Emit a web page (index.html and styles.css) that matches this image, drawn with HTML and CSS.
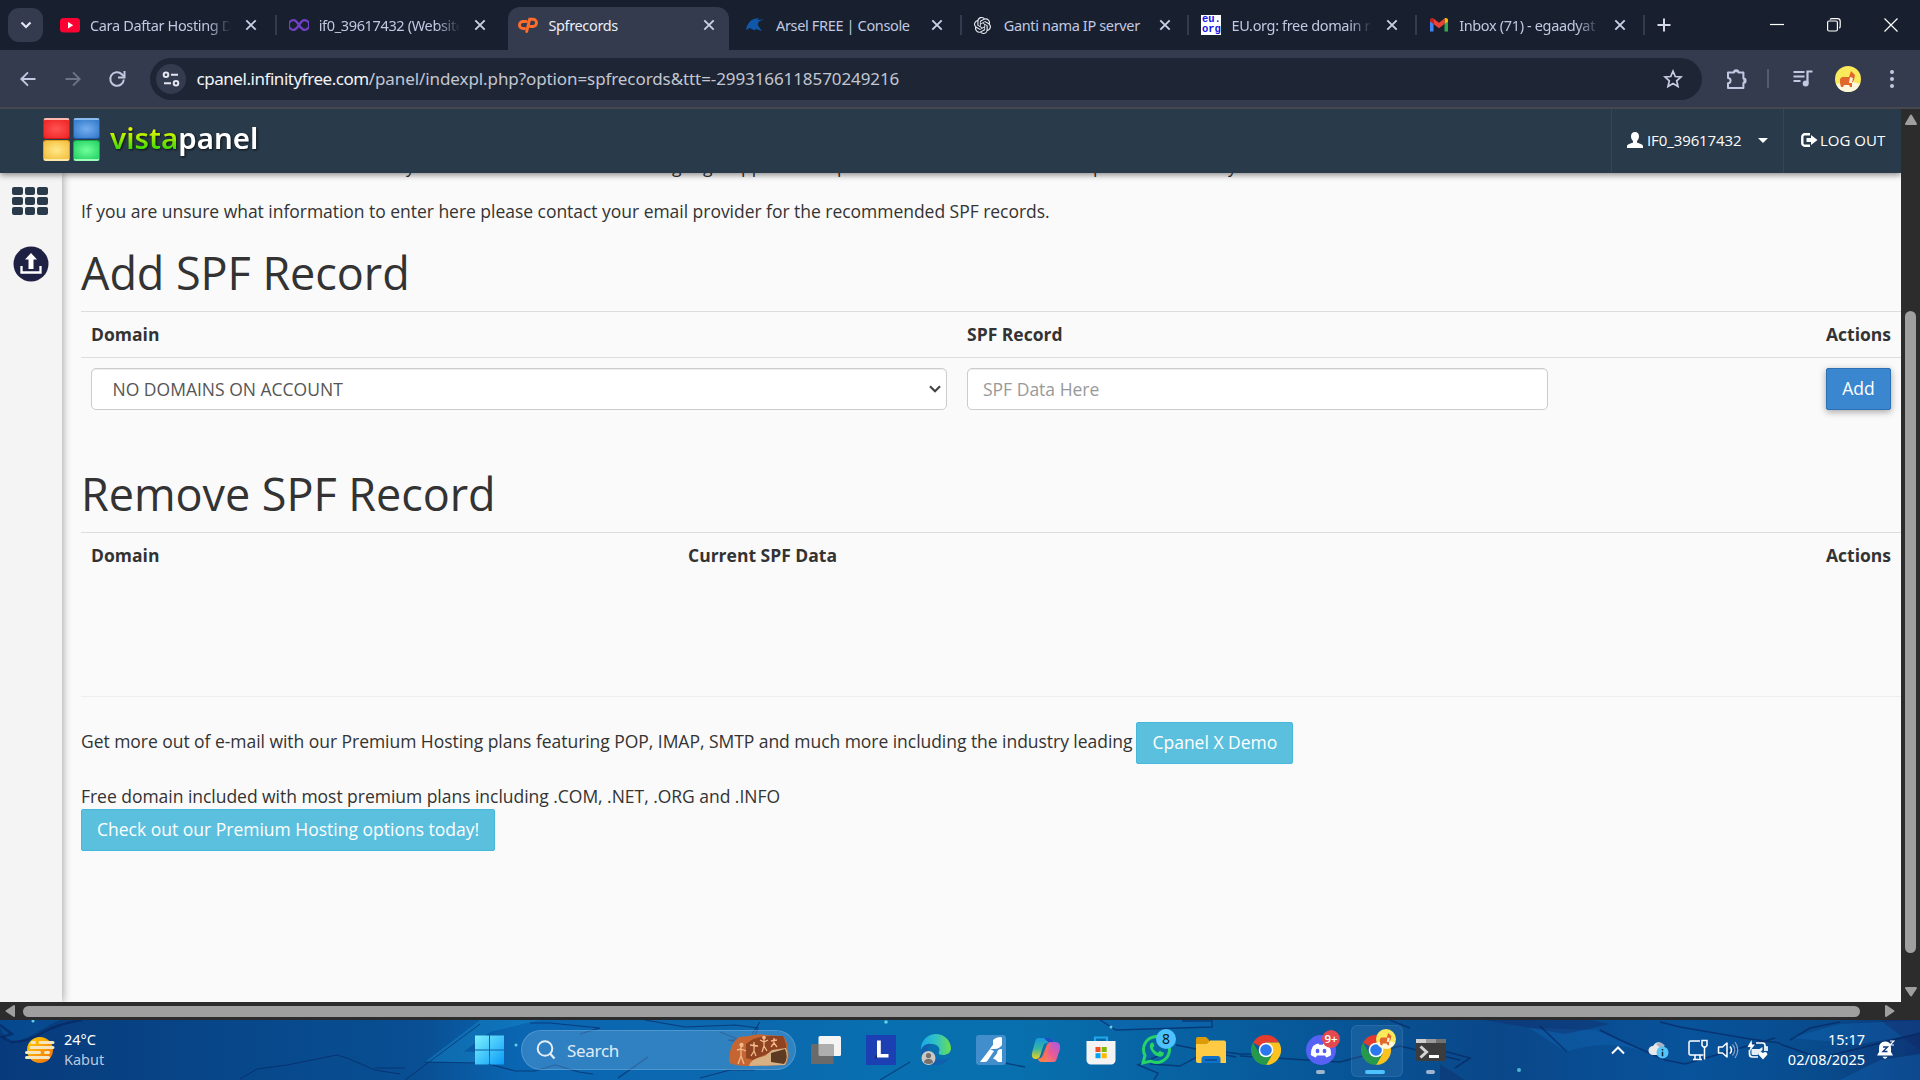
FILE: index.html
```html
<!DOCTYPE html>
<html lang="en">
<head>
<meta charset="utf-8">
<title>Spfrecords</title>
<link rel="stylesheet" href="styles.css">
</head>
<body>
<div class="screen">
  <div class="tabstrip">
    <div class="tab-search"><svg width="12" height="8" viewBox="0 0 12 8"><path d="M1.5 1.5L6 6l4.5-4.5" fill="none" stroke="#e3e6f3" stroke-width="2.2"/></svg></div>
    <div class="tabs">
      <div class="tab wide1"><span class="fav"><svg width="20" height="20" viewBox="0 0 20 20"><rect y="3" width="20" height="14.5" rx="3.5" fill="#ff0033"/><path d="M8 7v6.4l5.2-3.2z" fill="#fff"/></svg></span><span class="label fade">Cara Daftar Hosting Di</span><svg class="x"><use href="#x"/></svg></div>
      <div class="tab wide2 nosep"><span class="fav"><svg width="20" height="20" viewBox="0 0 20 20"><path d="M10 10C7.500 6.300 6 5.200 4.600 5.200a4.800 4.800 0 0 0 0 9.600C6 14.800 7.500 13.700 10 10s4-4.800 5.400-4.800a4.800 4.800 0 0 1 0 9.600C14 14.800 12.500 13.700 10 10z" fill="none" stroke="#7340c8" stroke-width="2.300"/></svg></span><span class="label fade">if0_39617432 (Website)</span><svg class="x"><use href="#x"/></svg></div>
      <div class="tab nosep active"><span class="fav"><svg width="20" height="20" viewBox="0 0 20 20"><path d="M8.200 6.500H5a3.500 3.500 0 0 0 0 7h1.500M8.700 16.500L11.700 4.200h3.200a3.600 3.600 0 0 1 0 7.300h-2.600" fill="none" stroke="#ff6c2c" stroke-width="2.900" stroke-linecap="round"/></svg></span><span class="label">Spfrecords</span><svg class="x"><use href="#x"/></svg></div>
      <div class="tab"><span class="fav"><svg width="20" height="20" viewBox="0 0 20 20"><path d="M0 15c1-5 3-9 8-11l5-1-1.500 2L19 4c-5 1-8 3.500-7 6.500l4 5.500-6-2-1.500 1.500L4 13z" fill="#1157a8"/></svg></span><span class="label">Arsel FREE | Console</span><svg class="x"><use href="#x"/></svg></div>
      <div class="tab"><span class="fav gpt"><svg width="17" height="17" viewBox="0 0 24 24"><path fill="#eceef5" d="M22.2819 9.8211a5.9847 5.9847 0 0 0-.5157-4.9108 6.0462 6.0462 0 0 0-6.5098-2.9A6.0651 6.0651 0 0 0 4.9807 4.1818a5.9847 5.9847 0 0 0-3.9977 2.9 6.0462 6.0462 0 0 0 .7427 7.0966 5.98 5.98 0 0 0 .511 4.9107 6.051 6.051 0 0 0 6.5146 2.9001A5.9847 5.9847 0 0 0 13.2599 24a6.0557 6.0557 0 0 0 5.7718-4.2058 5.9894 5.9894 0 0 0 3.9977-2.9001 6.0557 6.0557 0 0 0-.7475-7.0729zm-9.022 12.6081a4.4755 4.4755 0 0 1-2.8764-1.0408l.1419-.0804 4.7783-2.7582a.7948.7948 0 0 0 .3927-.6813v-6.7369l2.02 1.1686a.071.071 0 0 1 .038.052v5.5826a4.504 4.504 0 0 1-4.4945 4.4944zm-9.6607-4.1254a4.4708 4.4708 0 0 1-.5346-3.0137l.142.0852 4.783 2.7582a.7712.7712 0 0 0 .7806 0l5.8428-3.3685v2.3324a.0804.0804 0 0 1-.0332.0615L9.74 19.9502a4.4992 4.4992 0 0 1-6.1408-1.6464zM2.3408 7.8956a4.485 4.485 0 0 1 2.3655-1.9728V11.6a.7664.7664 0 0 0 .3879.6765l5.8144 3.3543-2.0201 1.1685a.0757.0757 0 0 1-.071 0l-4.8303-2.7865A4.504 4.504 0 0 1 2.3408 7.872zm16.5963 3.8558L13.1038 8.364 15.1192 7.2a.0757.0757 0 0 1 .071 0l4.8303 2.7913a4.4944 4.4944 0 0 1-.6765 8.1042v-5.6772a.79.79 0 0 0-.407-.667zm2.0107-3.0231l-.142-.0852-4.7735-2.7818a.7759.7759 0 0 0-.7854 0L9.409 9.2297V6.8974a.0662.0662 0 0 1 .0284-.0615l4.8303-2.7866a4.4992 4.4992 0 0 1 6.6802 4.66zM8.3065 12.863l-2.02-1.1638a.0804.0804 0 0 1-.038-.0567V6.0742a4.4992 4.4992 0 0 1 7.3757-3.4537l-.142.0805L8.704 5.459a.7948.7948 0 0 0-.3927.6813zm1.0976-2.3654l2.602-1.4998 2.6069 1.4998v2.9994l-2.5974 1.4997-2.6067-1.4997Z"/></svg></span><span class="label">Ganti nama IP server</span><svg class="x"><use href="#x"/></svg></div>
      <div class="tab"><span class="fav eu">eu.<br>org</span><span class="label fade">EU.org: free domain re</span><svg class="x"><use href="#x"/></svg></div>
      <div class="tab"><span class="fav"><svg width="20" height="20" viewBox="0 0 20 20"><path d="M1 5v11.500h3.500V9z" fill="#4285f4"/><path d="M19 5v11.500h-3.500V9z" fill="#34a853"/><path d="M1 5.500c0-2.500 2.300-3 3.500-2V9L1 6.500z" fill="#c5221f"/><path d="M19 5.500c0-2.500-2.300-3-3.500-2V9L19 6.500z" fill="#fbbc04"/><path d="M4.500 3.500L10 7.800l5.500-4.300V9L10 13.200 4.500 9z" fill="#ea4335"/></svg></span><span class="label fade">Inbox (71) - egaadyat</span><svg class="x"><use href="#x"/></svg></div>
    </div>
    <svg class="plus" width="14" height="14" viewBox="0 0 14 14"><path d="M7 .5v13M.5 7h13" stroke="#d3d7e8" stroke-width="2"/></svg>
    <div class="winbtns">
      <svg width="14" height="14" viewBox="0 0 14 14"><path d="M0 6.500h14" stroke="#fff" stroke-width="1.200"/></svg>
      <svg width="14" height="14" viewBox="0 0 14 14"><rect x=".6" y="3" width="9.800" height="10" rx="1.500" fill="none" stroke="#fff" stroke-width="1.200"/><path d="M3 1.500c.5-.7 1-.9 2-.9h5.500a2.700 2.700 0 0 1 2.700 2.700V8c0 1-.2 1.800-.9 2.300" fill="none" stroke="#fff" stroke-width="1.200"/></svg>
      <svg width="14" height="14" viewBox="0 0 14 14"><path d="M.5.500l13 13m0-13l-13 13" stroke="#fff" stroke-width="1.200"/></svg>
    </div>
  </div>

  <div class="toolbar">
    <div class="nav">
      <svg width="20" height="20" viewBox="0 0 20 20"><path d="M17.500 10H3.500M10 3.300L3.300 10l6.700 6.700" fill="none" stroke="#c0c8e2" stroke-width="1.900"/></svg>
      <svg width="20" height="20" viewBox="0 0 20 20"><path d="M2.500 10h14M10 3.300l6.700 6.700-6.700 6.700" fill="none" stroke="#6d7387" stroke-width="1.900"/></svg>
      <svg width="20" height="20" viewBox="0 0 20 20"><path d="M16.800 10.500A6.800 6.800 0 1 1 14.800 5.200L17 7.500" fill="none" stroke="#c0c8e2" stroke-width="2"/><path d="M17.500 2v6.500H11" fill="none" stroke="#c0c8e2" stroke-width="2"/></svg>
    </div>
    <div class="omnibox">
      <span class="site"><svg width="18" height="16" viewBox="0 0 18 16"><g fill="none" stroke="#e3e6f0" stroke-width="2"><circle cx="4" cy="3.700" r="2.300"/><path d="M9 3.700h7M2 12.300h7"/><circle cx="14" cy="12.300" r="2.300"/></g></svg></span>
      <span class="url"><span class="host">cpanel.infinityfree.com</span>/panel/indexpl.php?option=spfrecords&amp;ttt=-2993166118570249216</span>
      <svg class="star" width="20" height="20" viewBox="0 0 20 20"><path d="M10 2.200l2.300 5.300 5.700.5-4.300 3.800 1.300 5.700-5-3-5 3 1.300-5.700L2 8l5.700-.5z" fill="none" stroke="#c9cde0" stroke-width="1.700"/></svg>
    </div>
    <svg class="puzzle" width="22" height="22" viewBox="0 0 22 22"><path d="M2 4.500h6a2.200 2.200 0 0 1 4.400 0h5v6a2.200 2.200 0 0 1 0 4.400v5H2v-4.700a2.600 2.600 0 0 0 0-5.200z" fill="none" stroke="#c0c8e2" stroke-width="2" stroke-linejoin="round"/><path d="M8 4.200C8 1.700 12.400 1.700 12.400 4.200zM17.400 10.500c3 0 3 4.400 0 4.400z" fill="#c0c8e2"/></svg>
    <i class="tsep"></i>
    <svg class="music" width="20" height="18" viewBox="0 0 20 18"><path d="M.5 2h11M.5 6.500h11M.5 11h7" stroke="#c0c8e2" stroke-width="2"/><path d="M14.500 13V1.500H19.500" fill="none" stroke="#c0c8e2" stroke-width="2.200"/><circle cx="12.700" cy="13.500" r="3" fill="#c0c8e2"/></svg>
    <svg class="avatar" width="26" height="26" viewBox="0 0 26 26"><use href="#corgi"/></svg>
    <svg class="dots" width="6" height="20" viewBox="0 0 6 20"><g fill="#c0c8e2"><circle cx="3" cy="3" r="2"/><circle cx="3" cy="10" r="2"/><circle cx="3" cy="17" r="2"/></g></svg>
  </div>

  <div class="viewport">
    <div class="page">
      <header class="topbar">
        <div class="logo">
          <span class="squares"><i class="sq red"></i><i class="sq blue"></i><i class="sq yellow"></i><i class="sq green"></i></span>
          <span class="brand"><span class="vista">vista</span><span class="panel">panel</span></span>
        </div>
        <div class="user"><svg width="16" height="16" viewBox="0 0 16 16"><path d="M8 0c2.600 0 4 1.800 4 4.300 0 1.900-.8 3.700-2 4.700v1.500c2.500 1 6 2 6 3.500v2H0v-2c0-1.500 3.500-2.500 6-3.500V9C4.800 8 4 6.200 4 4.300 4 1.800 5.400 0 8 0z" fill="#fff"/></svg><span class="uname">IF0_39617432</span><i class="caret"></i></div>
        <div class="logout"><svg width="17" height="14" viewBox="0 0 17 14"><path d="M9 1.200H4A2.600 2.600 0 0 0 1.300 4v6A2.600 2.600 0 0 0 4 12.800h5" fill="none" stroke="#fff" stroke-width="2.400"/><path d="M10 2l6.500 5L10 12V9H5.500V5H10z" fill="#fff"/></svg><span class="lname">LOG OUT</span></div>
      </header>
      <div class="body">
        <aside class="side">
          <span class="apps"><i></i><i></i><i></i><i></i><i></i><i></i><i></i><i></i><i></i></span>
          <svg width="36" height="36" viewBox="0 0 36 36"><circle cx="18" cy="18" r="17.500" fill="#1f2144"/><path d="M18 7l6 6.500h-3.500V23h-5v-9.500H12z" fill="#fff"/><path d="M8.500 20v6.500h19V20" fill="none" stroke="#fff" stroke-width="2.300"/></svg>
        </aside>
        <main class="content">
          <div class="cut"><span>y</span><span>g</span><span>g</span><span>pp</span><span>p</span><span>p</span><span>y</span></div>
          <p class="note">If you are unsure what information to enter here please contact your email provider for the recommended SPF records.</p>
          <h2>Add SPF Record</h2>
          <div class="row add"><b>Domain</b><b>SPF Record</b><b>Actions</b></div>
          <div class="row add form">
            <div class="select"><span>NO DOMAINS ON ACCOUNT</span><svg width="12" height="8" viewBox="0 0 12 8"><path d="M1 1.200l5 5 5-5" fill="none" stroke="#444" stroke-width="2.200"/></svg></div>
            <div class="input">SPF Data Here</div>
            <button class="btn primary">Add</button>
          </div>
          <h2 class="second">Remove SPF Record</h2>
          <div class="row rem"><b>Domain</b><b>Current SPF Data</b><b>Actions</b></div>
          <div class="rule"></div>
          <p class="promo"><span>Get more out of e-mail with our Premium Hosting plans featuring POP, IMAP, SMTP and much more including the industry leading</span><button class="btn info">Cpanel X Demo</button></p>
          <p class="free">Free domain included with most premium plans including .COM, .NET, .ORG and .INFO</p>
          <button class="btn info">Check out our Premium Hosting options today!</button>
        </main>
      </div>
    </div>
    <div class="vbar"><svg width="14" height="12" viewBox="0 0 14 12"><path d="M7 1.500l5 8.500H2z" fill="#9f9f9f" stroke="#9f9f9f" stroke-width="2" stroke-linejoin="round"/></svg><i></i><svg width="14" height="12" viewBox="0 0 14 12"><path d="M7 9.500L12 2H2z" fill="#9f9f9f" stroke="#9f9f9f" stroke-width="2" stroke-linejoin="round"/></svg></div>
  </div>
  <div class="hbar"><svg width="10" height="14" viewBox="0 0 10 14"><path d="M1.500 7L9 2v10z" fill="#9f9f9f" stroke="#9f9f9f" stroke-width="2" stroke-linejoin="round"/></svg><i></i><svg width="10" height="14" viewBox="0 0 10 14"><path d="M8.500 7L1 2v10z" fill="#9f9f9f" stroke="#9f9f9f" stroke-width="2" stroke-linejoin="round"/></svg></div>

  <div class="taskbar">
    <svg class="wall" width="1920" height="60" viewBox="0 0 1920 60">
      <defs>
        <linearGradient id="w" x1="0" x2="1"><stop offset="0" stop-color="#073a7c"/><stop offset=".04" stop-color="#083f80"/><stop offset=".13" stop-color="#07488b"/><stop offset=".22" stop-color="#094f93"/><stop offset=".27" stop-color="#0a66b2"/><stop offset=".38" stop-color="#0c68ae"/><stop offset=".46" stop-color="#086fb0"/><stop offset=".53" stop-color="#0870ae"/><stop offset=".6" stop-color="#0864a4"/><stop offset=".7" stop-color="#075596"/><stop offset=".78" stop-color="#0a4789"/><stop offset=".88" stop-color="#08539b"/><stop offset=".95" stop-color="#084b8c"/><stop offset="1" stop-color="#0c3576"/></linearGradient>
      </defs>
      <rect width="1920" height="60" fill="url(#w)"/>
      <path d="M0 0h60C40 8 28 22 8 22L0 8z" fill="#0757a0" opacity=".5"/>
      <path d="M425 42l55-42h60l-50 12-40 30zM430 42q40-22 75 2z" fill="#1483c5" opacity=".5"/>
      <path d="M1095 0l20 11 96-5V0zM1530 8l36 24q40-14 80 0l-50-22zM1790 18l50-14 80-4v14l-60 10zM1840 60l40-20 40-6v26z" fill="#1267b4" opacity=".4"/>
      <path d="M1485 0l80 14 45-10-20-4zM1880 0h40v30zM1440 44l25 16h-25z" fill="#152560" opacity=".35"/>
      <g fill="none" stroke="#07225c" stroke-width="1.600" opacity=".6">
        <path d="M0 5l12 9-10 3 10 5q15 0 30-9T82 0" stroke-width="2.500"/>
        <path d="M240 59l17-10 30-4 50-10 10 3 28 12 25 4M375 48l30 0M405 60L480 4" stroke-width="1"/>
        <path d="M425 42l60 1 30 8h20l20-6 24 7 14 2M530 3l20 0 50 5-20 6M645 0l40 7 50-2 23 3-5 12-25 0 18 4M760 2l-8 12M618 58l30-21M700 58l30-8 25 0M720 12l30 12M880 60l30-18" stroke-width="1.200"/>
        <path d="M1100 0l16 10 96-3v-6h-30M1160 35l-22 10 20 8-4 7M1150 44l30 2 30-16 30 4 40 0M1176 25l60 12M1240 36l100 6 60-16 60 14M1390 0l20 8M1000 42l25 5" stroke-width="1.400"/>
        <path d="M1540 6l27 26M1600 10l20 10 45 20 20 4 90-26M1660 2l20 5 70 12 30 4M1790 20l20-12 30-6M1780 24l40 14 100-25M1440 30l30 8-15 10" stroke-width="1.700"/>
      </g>
      <g fill="#5fd0e6"><circle cx="516" cy="25" r="1.500"/><circle cx="886" cy="2" r="1.800"/><circle cx="33" cy="1" r="1.500"/><circle cx="1111" cy="7" r="1.500"/><circle cx="1519" cy="50" r="2" opacity=".8"/></g>
    </svg>
    <div class="weather">
      <svg width="32" height="28" viewBox="0 0 32 28"><defs><linearGradient id="sun" x1="0" x2="1" y1="0" y2="1"><stop offset="0" stop-color="#ffd400"/><stop offset="1" stop-color="#f36a0c"/></linearGradient></defs><circle cx="16" cy="14" r="13" fill="url(#sun)"/><g stroke="#f6e6bf" stroke-width="3" stroke-linecap="round"><path d="M8 6.500h2.500M16 6.500h13M7 11.500h22M2.500 16.500h13M21.500 16.500h3M2.500 21.500h22"/></g></svg>
      <div class="two"><span>24°C</span><span class="dim">Kabut</span></div>
    </div>
    <svg class="start" width="30" height="30" viewBox="0 0 30 30"><defs><linearGradient id="st" x1="0" x2="1" y1="0" y2="1"><stop offset="0" stop-color="#7df1fd"/><stop offset="1" stop-color="#0a9bf8"/></linearGradient></defs><path d="M0 .5h14v14H0zM15 .5h14v14H15zM0 15.500h14v14H0zM15 15.500h14v14H15z" fill="url(#st)"/></svg>
    <div class="search">
      <svg width="20" height="20" viewBox="0 0 20 20"><circle cx="9" cy="8.500" r="7.300" fill="none" stroke="#e6edf5" stroke-width="2"/><path d="M14 13.500l4.500 5" stroke="#e6edf5" stroke-width="2.200"/></svg>
      <span class="stext">Search</span>
      <svg class="rock" width="60" height="32" viewBox="0 0 60 32"><path d="M0 28q0-18 10-25l10-1Q30-1 36 1l18 1q5 5 5 14 2 10-3 15l-35 1q-18 0-21-4z" fill="#c46532"/><path d="M17 10Q25 2 42 2h12q4 8 3 14l-15 2-18 8-7-2z" fill="#8f4320"/><path d="M20 32q2-8 16-10l7-6 14-2q4 9-1 17z" fill="#d7b183"/><path d="M42 19l14-4q4 9-1 15l-13-2z" fill="#5d3a22"/><g stroke="#f2b98a" stroke-width="1.300"><path d="M12 13v10M8 16l4-1 5 2M12 22l-3 8M12 22l3 8M25 8v9M21 11l8 1M25 17l-3 5M25 17l2 5M35 5v8M31 6l4 2 4-2M35 12l-2 6M35 12l3 5M45 4v6M42 7l6-1M45 9l-3 4M45 9l3 4" fill="none"/><circle cx="12.500" cy="11" r="1.500" fill="#f2b98a"/><circle cx="35" cy="3.500" r="1.200" fill="#f2b98a"/></g></svg>
    </div>
    <div class="apps-row">
      <span class="slot"><svg width="30" height="30" viewBox="0 0 30 30"><rect x="7.500" y="1" width="22.500" height="20" rx="1.500" fill="#f4f4f4"/><rect x="0" y="9" width="22.500" height="20" rx="1.500" fill="#6a6a6a"/><path d="M7.500 9h15v12H9a1.500 1.500 0 0 1-1.500-1.500z" fill="#aeaeae"/></svg></span>
      <span class="slot"><svg width="30" height="30" viewBox="0 0 30 30"><path d="M0 0h30v30H0z" fill="#1d3fb4"/><path d="M11 6v13l-2.500 5L12 22z" fill="#0b2d3c"/><path d="M11 5.500h3.800V19H22.500v3.500H11z" fill="#fff"/></svg></span>
      <span class="slot"><svg width="32" height="32" viewBox="0 0 32 32"><defs><linearGradient id="ed" x1="0" x2="1"><stop offset="0" stop-color="#19a9e8"/><stop offset=".55" stop-color="#35c4c0"/><stop offset="1" stop-color="#6ae04a"/></linearGradient></defs><path d="M1 16A15 15 0 0 1 31 14c0 5-4 7-8 7-4 0-5-1.500-4-3 2-5-3-8-7-8-5 0-9 2-11 6z" fill="url(#ed)"/><path d="M1 16c2-5 6-7 10-6-4 3-4 9 1 13 5 4 12 3 17 1-4 6-10 8-16 7C5 30 1 24 1 16z" fill="#1260ad"/><circle cx="8.500" cy="24" r="7" fill="#cbc9c6"/><circle cx="8.500" cy="21.500" r="2.600" fill="#77716c"/><path d="M4 28.500c0-5 9-5 9 0q-4 3-9 0z" fill="#77716c"/></svg></span>
      <span class="slot"><svg width="30" height="30" viewBox="0 0 30 30"><rect width="30" height="30" rx="3" fill="#428dcb"/><path d="M17 5q3-3 8-3l1 1v7q-3 4-7 4h-5l2-3 1-1zM14 14l4 2L12 25q-1 2-3 2H4zM26 14v13h-4q-2-3-5-3.500l4-5q0-3 2-4z" fill="#fff"/></svg></span>
      <span class="slot"><svg width="30" height="30" viewBox="0 0 30 30"><defs><linearGradient id="c1" x1="0" x2="0" y1="0" y2="1"><stop offset="0" stop-color="#1697e0"/><stop offset=".5" stop-color="#39b6a0"/><stop offset="1" stop-color="#f0d020"/></linearGradient><linearGradient id="c2" x1="1" x2="0" y1="0" y2="1"><stop offset="0" stop-color="#a45be8"/><stop offset=".5" stop-color="#ec5a92"/><stop offset="1" stop-color="#ff9a40"/></linearGradient></defs><path d="M7 3h12q3 0 4 5H16q-3 0-4 4l-3 9q-1 3-4 3-5 0-4-6L4 7q1-4 3-4z" fill="url(#c1)"/><path d="M13 3h6q3 0 4 5h-5z" fill="#1c4fc4"/><path d="M23 27H11q-3 0-4-3 3 0 5-3l4-11q1-3 4-3h5q5 1 4 7l-3 9q-1 4-3 4z" fill="url(#c2)"/><path d="M16 9q2-1 4-1l-5 15q-1 4-4 4-3 0-4-3 3 0 4-3z" fill="#ff7048" opacity=".6"/></svg></span>
      <span class="slot"><svg width="30" height="30" viewBox="0 0 30 30"><path d="M9 6V2.500h12V6" fill="none" stroke="#1ea9ec" stroke-width="2.200"/><path d="M.5 6h29v19a4.500 4.500 0 0 1-4.500 4.500H5A4.500 4.500 0 0 1 .5 25z" fill="#f3f3f3"/><path d="M9.500 12h5v5h-5z" fill="#f25022"/><path d="M15.700 12h5v5h-5z" fill="#7fba00"/><path d="M9.500 18.200h5v5h-5z" fill="#00a4ef"/><path d="M15.700 18.200h5v5h-5z" fill="#ffb900"/></svg></span>
      <span class="slot"><svg width="32" height="32" viewBox="0 0 32 32"><path d="M3 29l2-7.500A13 13 0 1 1 10.500 27z" fill="none" stroke="#25d366" stroke-width="3"/><path d="M11 9c-3 3 0 8 3 11s8 4 9.500 1l.3-2.200-4-2-2 2c-2-.7-4-2.700-5-5l1.700-1.800L13 8.500z" fill="#25d366"/></svg><b class="badge blue8">8</b></span>
      <span class="slot"><svg width="30" height="30" viewBox="0 0 30 30"><path d="M0 4q0-2 2-2h8l3 3v6H0z" fill="#dd9a07"/><path d="M0 9h11l3-3.500h14q2 0 2 2V28H2q-2 0-2-2z" fill="#ffcb45"/><path d="M5.500 28v-4q0-3 3-3h13q3 0 3 3v4z" fill="#0e70c8"/><path d="M9 25h12" stroke="#094a8c" stroke-width="1.500"/></svg></span>
      <span class="slot"><svg width="30" height="30" viewBox="0 0 30 30"><use href="#chrome"/></svg></span>
      <span class="slot run"><svg width="30" height="30" viewBox="0 0 30 30"><circle cx="15" cy="15" r="15" fill="#5662f6"/><path d="M7 11q3-2.500 5.500-2.500l.8 1.300h3.400l.8-1.300Q20 8.500 23 11q2.500 4 2.200 9-2.500 2-5 2.400l-1.200-2h-8l-1.200 2q-2.500-.4-5-2.400-.3-5 2.200-9z" fill="#fff"/><ellipse cx="11.500" cy="16" rx="1.900" ry="2.200" fill="#5662f6"/><ellipse cx="18.500" cy="16" rx="1.900" ry="2.200" fill="#5662f6"/></svg><b class="badge red9">9+</b></span>
      <span class="slot run on"><svg width="30" height="30" viewBox="0 0 30 30"><use href="#chrome"/></svg><svg class="mini" width="20" height="20" viewBox="0 0 26 26"><use href="#corgi"/></svg></span>
      <span class="slot run"><svg width="30" height="30" viewBox="0 0 30 30"><path d="M0 4.500h30V24q0 2-2 2H2q-2 0-2-2z" fill="#3c3c3c"/><path d="M0 4h10v4H0z" fill="#cfcfcf"/><path d="M10 4h10v4H10z" fill="#9a9a9a"/><path d="M20 4h10v4H20z" fill="#717171"/><path d="M4.500 11.500l6 5.500-6 5.500" fill="none" stroke="#d4d4d4" stroke-width="3"/><path d="M13 21.500h10" stroke="#fff" stroke-width="3"/></svg></span>
    </div>
    <div class="tray">
      <svg class="chev" width="14" height="9" viewBox="0 0 14 9"><path d="M1 7.500l6-6 6 6" fill="none" stroke="#fff" stroke-width="2"/></svg>
      <svg class="cloud" width="22" height="18" viewBox="0 0 22 18"><path d="M5 14a4.500 4.500 0 0 1 0-9Q8 0 12 1.500q3 1 4 4.500l-7 8z" fill="#e8e8e8"/><path d="M8 3q5-4 9 2l-5 2z" fill="#aab4c4"/><circle cx="14.500" cy="11.500" r="6" fill="#52c4f8"/><path d="M14.500 8v1.500M14.500 10.700v4.500" stroke="#10263c" stroke-width="1.500"/></svg>
      <svg class="mon" width="22" height="22" viewBox="0 0 22 22"><g fill="none" stroke="#fff" stroke-width="1.500"><path d="M13 2H3.500Q2 2 2 3.500v11Q2 16 3.500 16h13M6 20.500h9M8 16v4M13 16v4"/><path d="M15 1.500h5v5l-1.500 1.500h-2L15 6.500zM17.500 8v12.500"/></g></svg>
      <svg class="vol" width="22" height="20" viewBox="0 0 22 20"><path d="M1.500 7h4L10 3v14l-4.500-4h-4z" fill="none" stroke="#fff" stroke-width="1.500" stroke-linejoin="round"/><path d="M13 6.500q3 3.500 0 7" fill="none" stroke="#fff" stroke-width="1.500"/><path d="M15.500 4.500q4.500 5.500 0 11M18 2q5.500 8 0 16" fill="none" stroke="#7f9fca" stroke-width="1.300"/></svg>
      <svg class="bat" width="22" height="20" viewBox="0 0 22 20"><path d="M9 3h6.500q2.500 0 2.500 2.500V11M2.500 10v4q0 3 3 3H11M18 7h2v4" fill="none" stroke="#fff" stroke-width="1.700"/><path d="M4.500 9l8 0 3-2v3l-5 5H6q-1.500 0-1.500-1.500z" fill="#fff" opacity=".9"/><path d="M4.500 0L.5 7h3L2 12l6-7.500H5z" fill="#fff"/><path d="M16 19.500l-4.500-5q1-4 4.500-1.500 3.500-2.500 4.500 1.500z" fill="#fff"/></svg>
      <div class="two clock"><span>15:17</span><span>02/08/2025</span></div>
      <svg class="bell" width="18" height="20" viewBox="0 0 18 20"><path d="M8 1.500Q14 1 14 8v4l2 3.500H0L2 12V8q0-6 6-6.500z" fill="#fff"/><path d="M5.500 16.800h5q-2.500 4-5 0z" fill="#fff"/><path d="M6 7h4.500L6 11.500h4.500" fill="none" stroke="#123b7a" stroke-width="1.400"/><path d="M13 1h4l-4 4h4" fill="none" stroke="#fff" stroke-width="1.200"/></svg>
    </div>
  </div>
</div>
<svg class="defs" width="0" height="0">
  <symbol id="x" viewBox="0 0 12 12"><path d="M1.300 1.300l9.400 9.400m0-9.400l-9.400 9.400" stroke="currentColor" stroke-width="1.900"/></symbol>
  <symbol id="corgi" viewBox="0 0 26 26"><circle cx="13" cy="13" r="13" fill="#fbe95c"/><path d="M1 18q12-5 24 0a13 13 0 0 1-24 0z" fill="#fdf8dc"/><path d="M5 13l2-2h7l2-6 2 2 2 2-1 5-2 3v4h-2l-1-2H9l-1 2H6l-1-4z" fill="#e2672b"/><path d="M15 11l3 1-1 5-3 0z" fill="#fff0dc"/></symbol>
  <symbol id="chrome" viewBox="0 0 30 30"><path d="M15 15L2 7.500A15 15 0 0 1 28 7.500H15z" fill="#e33b2e"/><path d="M28 7.500A15 15 0 0 1 15 30l6.500-11.200L15 7.500z" fill="#fcc31e"/><path d="M2 7.500A15 15 0 0 0 15 30l6.500-11.300L15 15l-6.500 3.700z" fill="#26994a"/><circle cx="15" cy="15" r="7.300" fill="#fff"/><circle cx="15" cy="15" r="5.800" fill="#2a78ee"/></symbol>
</svg>
</body>
</html>
```
FILE: styles.css
```css
* { box-sizing: border-box; }
body { margin: 0; overflow: hidden; font-family: "Open Sans", "Noto Sans", sans-serif; }
svg { display: block; flex: none; }
.defs { position: absolute; }
.screen { width: 1920px; height: 1080px; display: flex; flex-direction: column; overflow: hidden; background: #fafafa; }

/* browser tabs */
.tabstrip { height: 50px; background: #18202f; display: flex; align-items: center; padding-left: 8px; font-family: "Noto Sans", sans-serif; }
.tab-search { width: 35px; height: 34px; border-radius: 11px; background: #353b4e; display: flex; align-items: center; justify-content: center; margin-right: 5px; }
.tabs { display: flex; }
.tab { width: 227.700px; height: 50px; display: flex; align-items: center; padding-left: 12px; position: relative; color: #c0c8e2; }
.tab.wide1 { width: 228.700px; }
.tab.wide2 { width: 229.700px; }
.tab::after { content: ""; position: absolute; right: 0; top: 15px; width: 2px; height: 20px; background: #353b4e; }
.tab.nosep::after { display: none; }
.fav { width: 20px; height: 20px; margin-right: 10px; flex: none; }
.gpt { padding: 1.500px 0 0 0; }
.eu { background: #fff; color: #1414e6; font: bold 10.500px/9.500px "Liberation Mono", monospace; text-align: center; }
.label { width: 142px; font-size: 14.500px; line-height: 20px; white-space: nowrap; overflow: hidden; letter-spacing: -0.350px; }
.fade { -webkit-mask-image: linear-gradient(90deg, #000 118px, transparent 141px); mask-image: linear-gradient(90deg, #000 118px, transparent 141px); }
.x { width: 12px; height: 12px; margin-left: 13px; color: #c9cfe4; }
.active { color: #eceef7; }
.active::before { content: ""; position: absolute; left: 2px; right: 5px; top: 7px; bottom: 0; background: #353b4e; border-radius: 12px 12px 0 0; }
.active > * { position: relative; }
.plus { margin-left: 12px; }
.winbtns { display: flex; gap: 43px; margin-left: auto; padding-right: 22px; }

/* toolbar */
.toolbar { height: 59px; background: #353b4e; border-bottom: 2px solid #46484e; display: flex; align-items: center; padding-left: 18px; font-family: "Noto Sans", sans-serif; }
.nav { display: flex; gap: 24.500px; width: 132px; }
.omnibox { width: 1552px; height: 42px; border-radius: 21px; background: #1e2636; display: flex; align-items: center; padding: 0 19px 0 6px; }
.site { width: 30px; height: 30px; border-radius: 50%; background: #353b4e; display: flex; align-items: center; justify-content: center; margin-right: 10.500px; }
.url { font-size: 17px; color: #c3c7d1; white-space: nowrap; letter-spacing: -0.090px; }
.host { color: #f3f4f8; letter-spacing: -0.450px; }
.star { margin-left: auto; }
.puzzle { margin-left: 24px; }
.tsep { width: 2px; height: 19px; background: #555b70; margin-left: 19px; }
.music { margin-left: 24px; }
.avatar { margin-left: 22px; }
.dots { margin-left: 28px; }

/* viewport */
.viewport { height: 893px; display: flex; }
.page { width: 1901px; display: flex; flex-direction: column; overflow: hidden; }
.topbar { height: 64px; background: #293a4a; color: #fff; display: flex; align-items: center; position: relative; z-index: 2; box-shadow: 0 2px 6px rgba(0, 0, 0, .45); }
.logo { display: flex; align-items: center; padding: 0 0 3px 43px; flex: 1; }
.squares { display: grid; grid-template-columns: 27px 27px; grid-auto-rows: 20.500px; gap: 1.500px 3px; }
.sq { border-radius: 3px; }
.red { background: radial-gradient(#ff5353, #ee2222); border: 1px solid #d01818; border-top: 2px solid #ffb9b0; }
.blue { background: radial-gradient(#75aef0, #2f76c8); border: 1px solid #1d5cae; border-top: 2px solid #8abcf2; }
.yellow { background: radial-gradient(#ffe98a, #f4bc3a); border: 1px solid #e09f22; border-bottom: 2px solid #ffe9a8; }
.green { background: radial-gradient(#72ff9c, #1fd060); border: 1px solid #16a84a; border-bottom: 2px solid #9affba; }
.brand { font: 600 29.500px/40px "Noto Sans", sans-serif; margin-left: 10px; display: flex; padding-bottom: 3px; filter: drop-shadow(1px 1px 1px rgba(0, 0, 0, .7)); }
.vista { background: linear-gradient(#e4f800 30%, #35d800 80%); -webkit-background-clip: text; background-clip: text; color: transparent; }
.user { width: 172px; height: 64px; border-left: 1px solid #33475a; display: flex; align-items: center; padding: 0 0 2px 15px; font-size: 15px; }
.uname { margin-left: 4px; letter-spacing: -0.100px; }
.caret { border: 5px solid transparent; border-top-color: #fff; border-bottom: 0; margin-left: auto; margin-right: 15px; }
.logout { width: 118px; height: 64px; border-left: 1px solid #33475a; display: flex; align-items: center; padding: 0 0 2px 17px; font-size: 15px; }
.lname { margin-left: 2px; }
.body { flex: 1; display: flex; background: #fafafa; }
.side { width: 62px; background: #f4f4f4; box-shadow: 1px 0 8px rgba(0, 0, 0, .35); padding: 14px 0 0 12px; }
.side svg { margin: 31px 0 0 .5px; }
.apps { display: grid; grid-template-columns: repeat(3, 10.500px); grid-auto-rows: 8px; gap: 2px; }
.apps i { background: #293a4a; border-radius: 2px; }

/* page content */
.content { flex: 1; padding-left: 19px; font-size: 17.500px; line-height: 25px; color: #333; }
.content p { margin: 0; letter-spacing: -0.030px; }
.cut { height: 26px; margin-top: -19px; position: relative; }
.cut span { position: absolute; }
.cut span:nth-child(1) { left: 325px; }
.cut span:nth-child(2) { left: 591px; }
.cut span:nth-child(3) { left: 622px; }
.cut span:nth-child(4) { left: 660px; }
.cut span:nth-child(5) { left: 756px; }
.cut span:nth-child(6) { left: 1012px; }
.cut span:nth-child(7) { left: 1147px; }
.note { padding-top: 19px; height: 44px; }
h2 { margin: 0; font-size: 45px; font-weight: 400; line-height: 50px; padding-top: 24px; height: 87px; letter-spacing: -0.060px; }
.row { display: grid; border-top: 1px solid #ddd; padding-top: 10px; }
.row b { padding-left: 10px; }
.add { grid-template-columns: 876px 859px 85px; height: 46px; }
.form { height: 110px; }
.rem { grid-template-columns: 597px 1138px 85px; height: 164px; }
.select { margin-left: 10px; width: 856px; height: 42px; border: 1px solid #ccc; border-radius: 5px; background: #fff; box-shadow: inset 0 1px 1px rgba(0, 0, 0, .075); color: #555; display: flex; align-items: center; justify-content: space-between; padding: 0 5px 0 20.500px; }
.input { margin-left: 10px; width: 581px; height: 42px; border: 1px solid #ccc; border-radius: 5px; background: #fff; box-shadow: inset 0 1px 1px rgba(0, 0, 0, .075); color: #999; padding: 8px 15px; }
.btn { font: 17.500px/25px "Open Sans", sans-serif; height: 42px; padding: 0 15px 1px; border: 1px solid; border-radius: 2px; color: #fff; white-space: nowrap; }
.primary { width: 65px; margin-left: 10px; background: #3a87cf; border-color: #2b6fb5; box-shadow: 0 2px 7px rgba(0, 0, 0, .35); }
.info { background: #5bc0de; border-color: #46b8da; }
.second { padding-top: 2px; height: 65px; }
.rule { border-top: 1px solid #eee; }
.promo { padding-top: 25px; height: 87px; display: flex; gap: 4px; }
.promo span { padding-top: 7px; letter-spacing: -0.040px; }
.free { height: 25px; }

/* scrollbars */
.vbar { width: 19px; background: #2c2c2c; display: flex; flex-direction: column; align-items: center; padding: 5px 0 4px; }
.vbar i { width: 11px; height: 642px; margin: 185px 0 auto; border-radius: 6px; background: #9f9f9f; }
.hbar { height: 18px; background: #2c2c2c; display: flex; align-items: center; padding: 0 25px 0 5px; }
.hbar i { height: 11px; width: 1837px; margin-left: 8px; margin-right: auto; border-radius: 6px; background: #9f9f9f; }

/* taskbar */
.taskbar { height: 60px; position: relative; display: flex; align-items: center; color: #fff; font-family: "Noto Sans", sans-serif; font-size: 14.500px; }
.taskbar > * { position: relative; }
.taskbar > .wall { position: absolute; left: 0; top: 0; }
.weather { width: 475px; display: flex; padding-left: 24px; align-items: center; gap: 8px; }
.two { display: flex; flex-direction: column; line-height: 20px; padding-bottom: 1.500px; }
.dim { color: #b9c8dd; }
.search { width: 275px; height: 40px; margin: 0 2px 0 16px; border-radius: 20px; background: rgba(118, 178, 226, .35); border: 1px solid rgba(150, 200, 240, .3); display: flex; align-items: center; padding: 0 6px 0 14px; }
.search .rock { margin-left: auto; }
.stext { font-size: 17px; margin-left: 11px; color: #e1ebf5; letter-spacing: -0.300px; }
.apps-row { display: flex; }
.slot { width: 55px; height: 60px; display: flex; align-items: center; justify-content: center; position: relative; }
.run::after { content: ""; position: absolute; left: 23px; bottom: 6px; width: 9px; height: 4px; border-radius: 2px; background: #9db5cf; }
.on::before { content: ""; position: absolute; left: 2.500px; top: 5px; width: 50px; height: 50px; border-radius: 6px; background: rgba(120, 170, 220, .14); border: 1px solid rgba(150, 190, 230, .13); }
.on svg { position: relative; }
.on::after { left: 17px; width: 20px; background: #4cc2ff; }
.slot .mini { position: absolute; left: 28px; top: 9px; }
.badge { position: absolute; left: 28px; top: 9px; width: 20px; height: 20px; border-radius: 50%; text-align: center; font-weight: 400; line-height: 20px; }
.blue8 { background: #4cc2ff; color: #0b1a28; font-size: 14px; }
.red9 { background: #e5484d; width: 18px; height: 18px; left: 29px; top: 10px; line-height: 18px; font-size: 11.500px; font-weight: 600; }
.tray { margin-left: auto; display: flex; align-items: center; padding-right: 25px; }
.cloud { margin-left: 23px; }
.mon { margin-left: 17px; }
.vol { margin-left: 8px; }
.bat { margin-left: 8px; }
.clock { text-align: right; width: 96px; }
.bell { margin-left: 12px; }
```
